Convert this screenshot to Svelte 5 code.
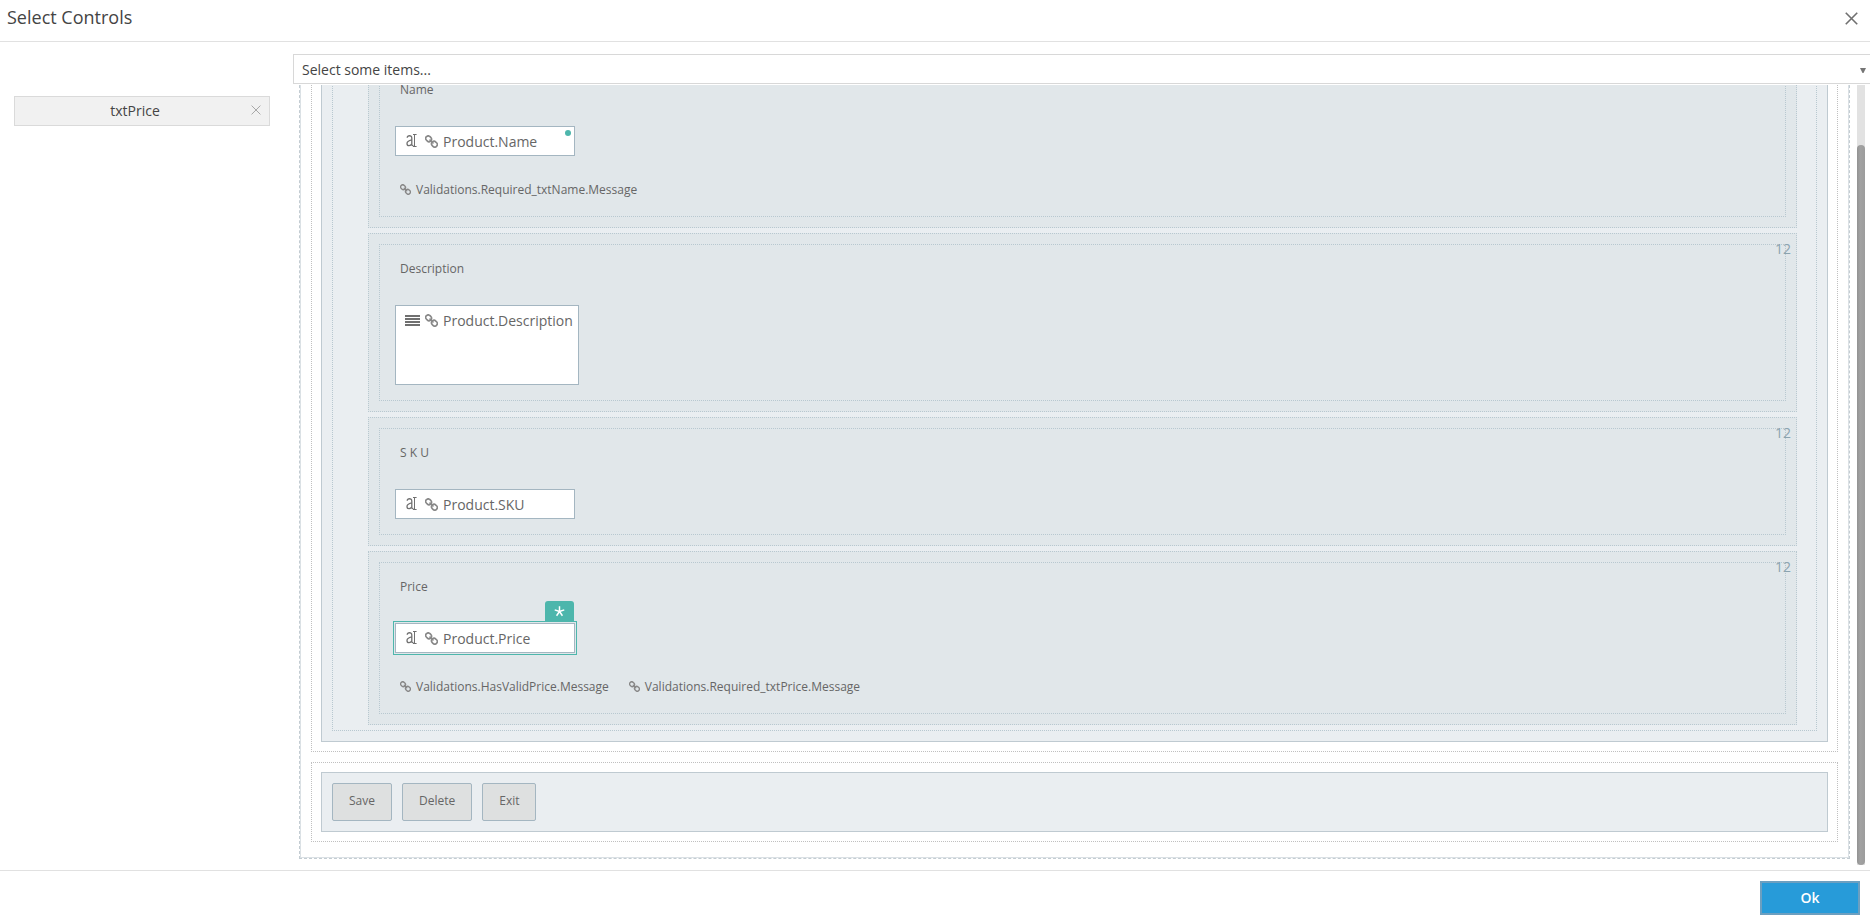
<script>
  let selected = $state(["txtPrice"]);

  let fields = $state([
    {
      id: "txtName",
      label: "Name",
      value: "Product.Name",
      mandatory: true,
      messages: ["Validations.Required_txtName.Message"],
    },
    {
      id: "txtDescription",
      label: "Description",
      value: "Product.Description",
      multiline: true,
      messages: [],
    },
    { id: "txtSKU", label: "S K U", value: "Product.SKU", messages: [] },
    {
      id: "txtPrice",
      label: "Price",
      value: "Product.Price",
      messages: [
        "Validations.HasValidPrice.Message",
        "Validations.Required_txtPrice.Message",
      ],
    },
  ]);

  const buttons = ["Save", "Delete", "Exit"];

  function remove(id) {
    selected = selected.filter((s) => s !== id);
  }
</script>

{#snippet linkIcon(size)}
  <svg class="icon link" width={size} height={size} viewBox="0 0 13 13" aria-hidden="true">
    <g fill="none" stroke="currentColor" stroke-width="1.6" stroke-linecap="round">
      <rect x="0.6" y="1.3" width="6" height="5" rx="2.5" transform="rotate(45 3.6 3.8)" />
      <rect x="6.4" y="6.7" width="6" height="5" rx="2.5" transform="rotate(45 9.4 9.2)" />
      <path d="M5 5l3 3" />
    </g>
  </svg>
{/snippet}

{#snippet closeIcon(size)}
  <svg width={size} height={size} viewBox="0 0 12 12" aria-hidden="true">
    <path d="M0.7 0.7l10.6 10.6M11.3 0.7L0.7 11.3" fill="none" stroke="currentColor" />
  </svg>
{/snippet}

<div class="dialog">
  <header>
    <h1>Select Controls</h1>
    <button class="close" type="button" aria-label="Close">
      {@render closeIcon(13)}
    </button>
  </header>

  <main>
    <aside>
      {#each selected as id}
        <div class="chip">
          <span>{id}</span>
          <button type="button" aria-label="Remove {id}" onclick={() => remove(id)}>
            {@render closeIcon(10)}
          </button>
        </div>
      {/each}
    </aside>

    <section class="picker">
      <div class="dropdown">
        <select aria-label="Controls">
          <option>Select some items...</option>
        </select>
        <svg width="6" height="5" viewBox="0 0 6 5" aria-hidden="true">
          <path d="M0 0h6L3.5 5h-1z" fill="#757575" />
        </svg>
      </div>

      <div class="preview">
        <div class="scroller">
          <div class="canvas">
            <div class="slot">
              <div class="panel">
                <div class="form">
                  {#each fields as field}
                    <div class="card">
                      <span class="cols">12</span>
                      <div class="cell">
                        <label for={field.id}>{field.label}</label>
                        <div
                          class="field"
                          class:multiline={field.multiline}
                          class:selected={selected.includes(field.id)}
                        >
                          {#if field.multiline}
                            <svg class="icon" width="15" height="11" viewBox="0 0 15 11" aria-hidden="true">
                              <path d="M0 0h15v2H0zM0 3h15v2H0zM0 6h15v2H0zM0 9h15v2H0z" fill="currentColor" />
                            </svg>
                          {:else}
                            <svg class="icon" width="15" height="15" viewBox="0 0 15 15" aria-hidden="true">
                              <g fill="none" stroke="currentColor">
                                <path stroke-width="1.3" d="M2.2 3.8C2.4 1.2 6.8 0.8 6.8 4.2V10.6Q7 12 8.4 11.4M6.8 5.8C4 6.4 2 7.2 2 9.4C2 12.4 5.8 12.2 6.8 9.8" />
                                <path d="M8 0.5h3.6M8 12.5h3.6M9.5 0.5v12" />
                              </g>
                            </svg>
                          {/if}
                          {@render linkIcon(13)}
                          {#if field.multiline}
                            <textarea id={field.id} rows="3" bind:value={field.value}></textarea>
                          {:else}
                            <input id={field.id} type="text" bind:value={field.value} />
                          {/if}
                          {#if field.mandatory}
                            <span class="dot"></span>
                          {/if}
                          {#if selected.includes(field.id)}
                            <span class="flag">
                              <svg width="11" height="11" viewBox="0 0 9 9" aria-hidden="true">
                                <path d="M4.5 4.5V0.3M4.5 4.5L0.6 3.2M4.5 4.5L8.4 3.2M4.5 4.5L2.1 8M4.5 4.5L6.9 8" fill="none" stroke="#fff" stroke-width="1.2" />
                              </svg>
                            </span>
                          {/if}
                        </div>
                        {#if field.messages.length}
                          <div class="messages">
                            {#each field.messages as message}
                              <span class="message">{@render linkIcon(11)}{message}</span>
                            {/each}
                          </div>
                        {/if}
                      </div>
                    </div>
                  {/each}
                </div>
              </div>
            </div>

            <div class="slot">
              <div class="panel actions">
                {#each buttons as button}
                  <button type="button">{button}</button>
                {/each}
              </div>
            </div>
          </div>
        </div>
        <div class="scrollbar"><div class="thumb"></div></div>
      </div>
    </section>
  </main>

  <footer>
    <button class="ok" type="button">Ok</button>
  </footer>
</div>

<style>
  :global(body) {
    background: #fff;
  }
  .dialog,
  .dialog * {
    box-sizing: border-box;
  }
  .dialog {
    display: flex;
    flex-direction: column;
    height: 100vh;
    overflow: hidden;
    font-family: "Open Sans", "Noto Sans", sans-serif;
    font-size: 14px;
    color: #444;
  }
  button,
  select,
  input,
  textarea {
    margin: 0;
    padding: 0;
    font: inherit;
    color: inherit;
  }
  svg {
    display: block;
    flex: none;
  }

  header {
    display: flex;
    align-items: center;
    justify-content: space-between;
    height: 42px;
    padding: 0 12px 8px 7px;
    border-bottom: 1px solid #e1e1e1;
  }
  h1 {
    margin: 0;
    font-size: 18px;
    line-height: 24px;
    font-weight: 400;
  }
  .close,
  .chip button {
    border: 0;
    background: none;
    cursor: pointer;
  }
  .close {
    margin-top: 4px;
    color: #707070;
  }
  .close path {
    stroke-width: 1.5;
  }

  main {
    flex: 1;
    display: flex;
    min-height: 0;
  }
  aside {
    flex: none;
    width: 293px;
    padding: 54px 23px 0 14px;
  }
  .chip {
    display: flex;
    align-items: center;
    height: 30px;
    padding: 0 8px 2px 4px;
    border: 1px solid #dadada;
    background: #f1f1f1;
  }
  .chip span {
    flex: 1;
    text-align: center;
  }
  .chip button {
    color: #999;
  }

  .picker {
    flex: 1;
    display: flex;
    flex-direction: column;
    min-width: 0;
    padding-top: 12px;
  }
  .dropdown {
    position: relative;
    height: 30px;
    margin-bottom: 1px;
  }
  .dropdown select {
    width: 100%;
    height: 30px;
    padding-left: 8px;
    border: 1px solid #d8d8d8;
    border-right: 0;
    border-radius: 0;
    background: #fff;
    appearance: none;
  }
  .dropdown svg {
    position: absolute;
    top: 14px;
    right: 4px;
    pointer-events: none;
  }

  .preview {
    flex: 1;
    display: flex;
    min-height: 0;
  }
  .scroller {
    flex: 1;
    display: flex;
    flex-direction: column;
    justify-content: flex-end;
    overflow: hidden;
    padding: 0 7px 11px 6px;
    color: #666;
  }
  .scrollbar {
    flex: none;
    display: flex;
    flex-direction: column;
    justify-content: flex-end;
    width: 8px;
    margin: 0 5px 5px 0;
    background: #e2e2e2;
  }
  .thumb {
    height: 92.3%;
    border-radius: 4px;
    background: linear-gradient(to right, #929292, #a2a2a2 40%, #9c9c9c);
  }

  .canvas {
    flex: none;
    display: flex;
    flex-direction: column;
    gap: 10px;
    padding: 11px 11px 16px;
    border: 1px dashed #c3ccd2;
    box-shadow: inset 0 0 0 1px #dbe1e5;
  }
  .slot {
    padding: 9px;
    border: 1px dotted #c0c0c0;
  }
  .panel {
    padding: 10px;
    border: 1px solid #bfcad1;
    background: #eaeef1;
  }
  .form {
    display: flex;
    flex-direction: column;
    gap: 5px;
    padding: 5px 19px 5px 35px;
    border: 1px dotted #b8c8d0;
  }
  .card {
    position: relative;
    padding: 10px;
    border: 1px dotted #b8c8d0;
    background: #e1e7ea;
  }
  .cols {
    position: absolute;
    top: 5px;
    right: 5px;
    line-height: 20px;
    color: #8ba3af;
  }
  .cell {
    display: flex;
    flex-direction: column;
    align-items: flex-start;
    padding: 15px;
    border: 1px dotted #b8c8d0;
  }
  label,
  .message {
    padding: 0 5px;
    font-size: 12px;
    line-height: 18px;
  }
  .field {
    position: relative;
    display: flex;
    align-items: center;
    gap: 5px;
    width: 180px;
    height: 30px;
    margin-top: 27px;
    padding-left: 9px;
    border: 1px solid #a4b6c1;
    background: #fff;
  }
  .field.multiline {
    align-items: flex-start;
    width: 184px;
    height: 80px;
  }
  .multiline .icon {
    margin-top: 9px;
  }
  .field.selected {
    outline: 1px solid #4db6ac;
    outline-offset: 1px;
  }
  .field input,
  .field textarea {
    flex: 1;
    min-width: 0;
    height: 28px;
    padding-top: 1px;
    border: 0;
    outline: 0;
    background: none;
    line-height: 26px;
  }
  .field textarea {
    height: 78px;
    padding-top: 2px;
    overflow: hidden;
    white-space: nowrap;
    resize: none;
  }
  .icon {
    color: #707070;
  }
  .icon.link {
    color: #888;
  }
  .multiline .link {
    margin-top: 8px;
  }
  .dot {
    position: absolute;
    top: 3px;
    right: 3px;
    width: 6px;
    height: 6px;
    border-radius: 50%;
    background: #4db6ac;
  }
  .flag {
    position: absolute;
    right: 0;
    bottom: 30px;
    display: flex;
    align-items: center;
    justify-content: center;
    width: 29px;
    height: 21px;
    border-radius: 3px 3px 0 0;
    background: #4db6ac;
  }
  .messages {
    display: flex;
    gap: 10px;
    margin: 25px 0 2px;
  }
  .message {
    display: flex;
    align-items: center;
    gap: 5px;
  }
  .message .icon {
    margin-bottom: 2px;
  }

  .actions {
    display: flex;
    gap: 10px;
  }
  .actions button {
    height: 38px;
    padding: 0 16px 3px;
    border: 1px solid #a4b6c1;
    border-radius: 2px;
    background: #dee0e0;
    font-size: 12px;
  }

  footer {
    display: flex;
    justify-content: flex-end;
    padding: 10px 10px 0;
    border-top: 1px solid #e1e1e1;
  }
  .ok {
    width: 100px;
    height: 34px;
    padding-bottom: 2px;
    border: 2px solid #6c9fc0;
    background: #279bd9;
    color: #fff;
    font-weight: 600;
  }
</style>
